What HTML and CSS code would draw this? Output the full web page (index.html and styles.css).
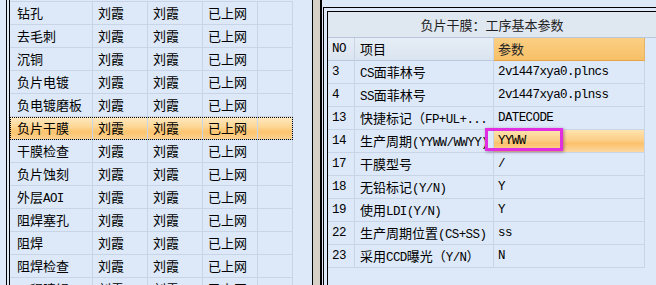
FILE: index.html
```html
<!DOCTYPE html>
<html lang="zh-CN">
<head>
  <meta charset="UTF-8">
  <meta name="viewport" content="width=device-width, initial-scale=1.0">
  <title>工序基本参数</title>
  <link rel="stylesheet" href="styles.css">
</head>
<body>
  <div class="left">
    <div class="rail">
      <div class="grid">
        <div class="row"><div class="cell">钻孔</div><div class="cell">刘霞</div><div class="cell">刘霞</div><div class="cell">已上网</div><div class="cell"></div></div>
        <div class="row"><div class="cell">去毛刺</div><div class="cell">刘霞</div><div class="cell">刘霞</div><div class="cell">已上网</div><div class="cell"></div></div>
        <div class="row"><div class="cell">沉铜</div><div class="cell">刘霞</div><div class="cell">刘霞</div><div class="cell">已上网</div><div class="cell"></div></div>
        <div class="row"><div class="cell">负片电镀</div><div class="cell">刘霞</div><div class="cell">刘霞</div><div class="cell">已上网</div><div class="cell"></div></div>
        <div class="row"><div class="cell">负电镀磨板</div><div class="cell">刘霞</div><div class="cell">刘霞</div><div class="cell">已上网</div><div class="cell"></div></div>
        <div class="row selected"><div class="cell">负片干膜</div><div class="cell">刘霞</div><div class="cell">刘霞</div><div class="cell">已上网</div><div class="cell"></div></div>
        <div class="row"><div class="cell">干膜检查</div><div class="cell">刘霞</div><div class="cell">刘霞</div><div class="cell">已上网</div><div class="cell"></div></div>
        <div class="row"><div class="cell">负片蚀刻</div><div class="cell">刘霞</div><div class="cell">刘霞</div><div class="cell">已上网</div><div class="cell"></div></div>
        <div class="row"><div class="cell">外层<span class="en">AOI</span></div><div class="cell">刘霞</div><div class="cell">刘霞</div><div class="cell">已上网</div><div class="cell"></div></div>
        <div class="row"><div class="cell">阻焊塞孔</div><div class="cell">刘霞</div><div class="cell">刘霞</div><div class="cell">已上网</div><div class="cell"></div></div>
        <div class="row"><div class="cell">阻焊</div><div class="cell">刘霞</div><div class="cell">刘霞</div><div class="cell">已上网</div><div class="cell"></div></div>
        <div class="row"><div class="cell">阻焊检查</div><div class="cell">刘霞</div><div class="cell">刘霞</div><div class="cell">已上网</div><div class="cell"></div></div>
        <div class="row"><div class="cell">工程喷锡</div><div class="cell">刘霞</div><div class="cell">刘霞</div><div class="cell">已上网</div><div class="cell"></div></div>
      </div>
    </div>
  </div>

  <div class="splitter"></div>

  <div class="right">
    <div class="frame">
      <div class="panel">
        <div class="title">负片干膜：工序基本参数</div>
        <div class="prow head">
          <div class="pcell no">NO</div>
          <div class="pcell">项目</div>
          <div class="pcell val">参数</div>
        </div>
        <div class="prow">
          <div class="pcell no">3</div>
          <div class="pcell"><span class="en">CS</span>面菲林号</div>
          <div class="pcell val en">2v1447xya0.plncs</div>
        </div>
        <div class="prow">
          <div class="pcell no">4</div>
          <div class="pcell"><span class="en">SS</span>面菲林号</div>
          <div class="pcell val en">2v1447xya0.plnss</div>
        </div>
        <div class="prow">
          <div class="pcell no">13</div>
          <div class="pcell">快捷标记（<span class="en">FP+UL+...</span></div>
          <div class="pcell val en">DATECODE</div>
        </div>
        <div class="prow">
          <div class="pcell no">14</div>
          <div class="pcell">生产周期<span class="en">(YYWW/WWYY)</span></div>
          <div class="pcell val en current">YYWW<div class="mark"></div></div>
        </div>
        <div class="prow">
          <div class="pcell no">17</div>
          <div class="pcell">干膜型号</div>
          <div class="pcell val en">/</div>
        </div>
        <div class="prow">
          <div class="pcell no">18</div>
          <div class="pcell">无铅标记<span class="en">(Y/N)</span></div>
          <div class="pcell val en">Y</div>
        </div>
        <div class="prow">
          <div class="pcell no">19</div>
          <div class="pcell">使用<span class="en">LDI(Y/N)</span></div>
          <div class="pcell val en">Y</div>
        </div>
        <div class="prow">
          <div class="pcell no">22</div>
          <div class="pcell">生产周期位置<span class="en">(CS+SS)</span></div>
          <div class="pcell val en">ss</div>
        </div>
        <div class="prow">
          <div class="pcell no">23</div>
          <div class="pcell">采用<span class="en">CCD</span>曝光（<span class="en">Y/N</span>）</div>
          <div class="pcell val en">N</div>
        </div>
      </div>
    </div>
  </div>
</body>
</html>
```

FILE: styles.css
```css
body {
  margin: 0;
  width: 656px;
  height: 285px;
  overflow: hidden;
  display: flex;
  background-color: #dde9f8;
  color: #000;
  font-family: "Noto Sans CJK SC", sans-serif;
  font-size: 13px;
}

.en {
  font-family: "Liberation Mono", "Noto Sans CJK SC", monospace;
  font-size: 12.5px;
  letter-spacing: -0.6px;
}

/* left list */

.left {
  width: 312px;
  flex: none;
  padding-left: 6px;
  box-sizing: border-box;
  background-color: #dde9f8;
}

.rail {
  height: 100%;
  border-left: 1px solid #000;
  padding-left: 2px;
}

.grid {
  height: 100%;
  overflow: hidden;
  border-left: 1px solid #000;
  padding-top: 1px;
  box-sizing: border-box;
}

.grid .row {
  display: grid;
  grid-template-columns: 83px 55px 55px 55px 35px;
  width: 283px;
  height: 23px;
}

.grid .row:first-child {
  border-top: 1px solid #c7d5e7;
}

.cell {
  box-sizing: border-box;
  border-right: 1px solid #c7d5e7;
  border-bottom: 1px solid #c7d5e7;
  padding-left: 5px;
  line-height: 22px;
  white-space: nowrap;
  overflow: hidden;
}

.cell:first-child {
  padding-left: 7px;
}

.row.selected {
  background: linear-gradient(#fee9c2 0%, #fdd898 40%, #fbc46f 65%, #fdd393 100%);
  outline: 1px dotted #000;
  outline-offset: -1px;
}

/* splitter between panes */

.splitter {
  width: 10px;
  flex: none;
  box-sizing: border-box;
  border-left: 1px solid #000;
  border-right: 2px solid #000;
  background-color: #d5d1c6;
}

/* right panel */

.right {
  flex: 1;
  padding-left: 1px;
  padding-top: 7px;
}

.frame {
  height: 100%;
  border-top: 1px solid #000;
  border-left: 1px solid #000;
  padding: 3px 0 0 3px;
}

.panel {
  height: 100%;
  border-top: 1px solid #000;
  border-left: 1px solid #000;
}

.title {
  height: 26px;
  box-sizing: border-box;
  border-bottom: 1px solid #b7c6d8;
  background-color: #dfe7f1;
  color: #222;
  text-align: center;
  line-height: 25px;
}

.prow {
  display: grid;
  grid-template-columns: 27px 139px 151px;
  height: 23px;
}

.pcell {
  box-sizing: border-box;
  border-right: 1px solid #c7d5e7;
  border-bottom: 1px solid #c7d5e7;
  padding-left: 5px;
  line-height: 22px;
  white-space: nowrap;
  overflow: hidden;
}

.pcell.no {
  padding-left: 4px;
  font-family: "Liberation Mono", monospace;
  font-size: 12.5px;
  letter-spacing: -0.4px;
}

.pcell.val {
  padding-left: 4px;
}

.prow.head .pcell {
  background: linear-gradient(#e6edf6, #dae4f0);
  border-bottom-color: #b9c8da;
}

.prow.head .pcell.val {
  background: linear-gradient(#fbcf84, #f7c067);
  border-bottom: 1px solid #e5a64a;
  border-right-color: #e5b46a;
  color: #222;
  font-family: "Noto Sans CJK SC", sans-serif;
  font-size: 13px;
  letter-spacing: 0;
}

.pcell.current {
  position: relative;
  overflow: visible;
  background: linear-gradient(#fee3b0 0%, #fccd83 50%, #fbc06a 60%, #fdd7a0 100%);
}

.mark {
  position: absolute;
  left: -9px;
  top: -2px;
  width: 78px;
  height: 23px;
  box-sizing: border-box;
  border: 3px solid #e02ee0;
  box-shadow: 1px 1px 3px rgba(90, 30, 90, 0.5);
}
```
